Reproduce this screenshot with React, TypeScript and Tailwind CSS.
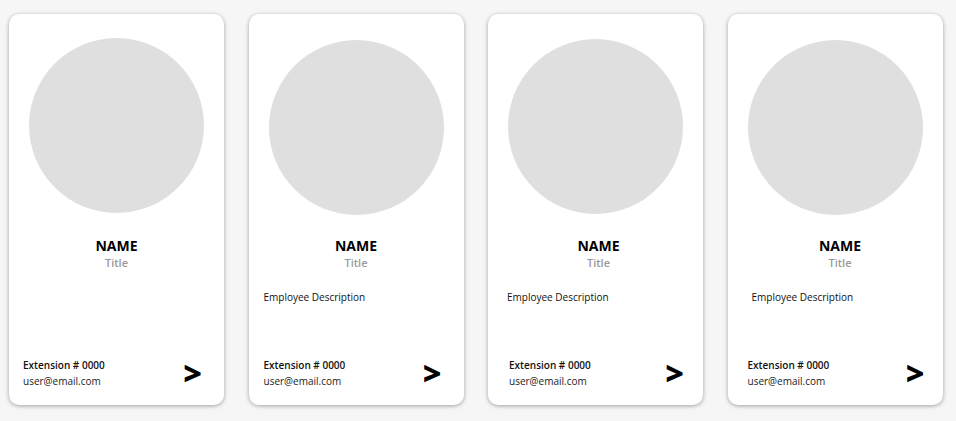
const cards = [
  { top: "mt-[24px]", nameTop: "mt-[24px]", desc: "", descPad: "pl-[14px]", footPad: "pl-[14px] pr-[22px]", nameShift: "" },
  { top: "mt-[26px]", nameTop: "mt-[22px]", desc: "Employee Description", descPad: "pl-[15px]", footPad: "pl-[15px] pr-[22px]", nameShift: "" },
  { top: "mt-[25px]", nameTop: "mt-[23px]", desc: "Employee Description", descPad: "pl-[19px]", footPad: "pl-[21px] pr-[19px]", nameShift: "pl-[6px]" },
  { top: "mt-[26px]", nameTop: "mt-[22px]", desc: "Employee Description", descPad: "pl-[24px]", footPad: "pl-[20px] pr-[18px]", nameShift: "pl-[10px]" },
];

function EmployeeCard({ card }: { card: (typeof cards)[number] }) {
  return (
    <div className="w-[215px] h-[391px] shrink-0 rounded-[10px] bg-white shadow-[0_1px_4px_rgba(0,0,0,0.35)] flex flex-col">
      <div className={`${card.top} mx-auto w-[175px] h-[175px] rounded-full bg-[#dfdfdf]`} />
      <div className={`${card.nameTop} flex flex-col items-center ${card.nameShift}`}>
        <span className="text-[14px] leading-[18px] font-bold text-black">NAME</span>
        <span className="text-[11px] leading-[16px] font-semibold text-[#999]">Title</span>
      </div>
      {card.desc && (
        <p className={`mt-[18px] ${card.descPad} text-[10px] leading-[16px] text-[#111]`}>{card.desc}</p>
      )}
      <div className={`mt-auto mb-[15px] ${card.footPad} flex items-center justify-between`}>
        <div className="flex flex-col">
          <span className="text-[10px] leading-[16px] font-semibold text-[#111]">Extension # 0000</span>
          <span className="text-[10px] leading-[17px] text-[#222]">user@email.com</span>
        </div>
        <span className="text-[32px] leading-none font-extrabold text-black -mt-[1px]">&gt;</span>
      </div>
    </div>
  );
}

export default function App() {
  return (
    <div
      className="w-[956px] h-[421px] bg-[#f6f6f6] pt-[14px] pl-[9px] flex gap-[24.5px]"
      style={{ fontFamily: '"Open Sans", "Noto Sans", sans-serif' }}
    >
      {cards.map((c, i) => (
        <EmployeeCard key={i} card={c} />
      ))}
    </div>
  );
}
